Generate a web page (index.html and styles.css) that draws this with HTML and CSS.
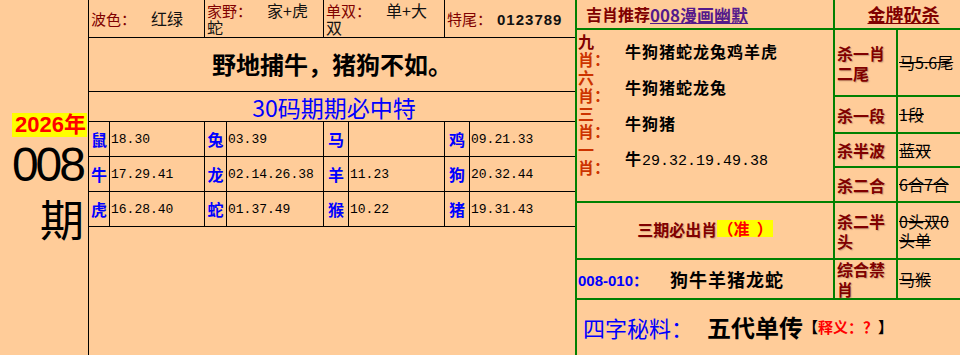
FILE: index.html
```html
<!DOCTYPE html>
<html lang="zh-CN">
<head>
<meta charset="utf-8">
<title>008期</title>
<link rel="stylesheet" href="styles.css">
</head>
<body>
<div class="page">
  <div class="issue">
    <span class="year">2026年</span>
    <span class="num">008</span>
    <span class="qi">期</span>
  </div>

  <div class="main">
    <div class="c s2 top"><div><span class="lbl">波色：</span><span class="val">红绿</span></div></div>
    <div class="c s2 top"><div><span class="lbl">家野：</span><span class="val">家+虎蛇</span></div></div>
    <div class="c s2 top"><div><span class="lbl">单双：</span><span class="val">单+大双</span></div></div>
    <div class="c s2 top end"><div><span class="lbl">特尾：</span><span class="val tail">0123789</span></div></div>

    <div class="c full slogan">野地捕牛，猪狗不如。</div>
    <div class="c full title">30码期期必中特</div>

    <div class="c an">鼠</div><div class="c nums">18.30</div>
    <div class="c an">兔</div><div class="c nums">03.39</div>
    <div class="c an">马</div><div class="c nums"></div>
    <div class="c an">鸡</div><div class="c nums end">09.21.33</div>

    <div class="c an">牛</div><div class="c nums">17.29.41</div>
    <div class="c an">龙</div><div class="c nums">02.14.26.38</div>
    <div class="c an">羊</div><div class="c nums">11.23</div>
    <div class="c an">狗</div><div class="c nums end">20.32.44</div>

    <div class="c an">虎</div><div class="c nums">16.28.40</div>
    <div class="c an">蛇</div><div class="c nums">01.37.49</div>
    <div class="c an">猴</div><div class="c nums">10.22</div>
    <div class="c an">猪</div><div class="c nums end">19.31.43</div>
  </div>

  <div class="panel">
    <div class="p head1"><span class="hl">吉肖推荐</span><span class="link">008漫画幽默</span></div>
    <div class="p head2"><span>金牌砍杀</span></div>

    <div class="p nine">
      <div class="nrow"><div class="nl"><span class="d">九</span><br>肖：</div><div class="nv">牛狗猪蛇龙兔鸡羊虎</div></div>
      <div class="nrow"><div class="nl">六<br>肖：</div><div class="nv">牛狗猪蛇龙兔</div></div>
      <div class="nrow"><div class="nl">三<br>肖：</div><div class="nv">牛狗猪</div></div>
      <div class="nrow"><div class="nl">一<br>肖：</div><div class="nv">牛<span class="mono">29.32.19.49.38</span></div></div>
    </div>

    <div class="p kl r2">杀一肖二尾</div><div class="p kv r2">马5.6尾</div>
    <div class="p kl r3">杀一段</div><div class="p kv r3">1段</div>
    <div class="p kl r4">杀半波</div><div class="p kv r4">蓝双</div>
    <div class="p kl r5">杀二合</div><div class="p kv r5">6合7合</div>

    <div class="p must"><span class="mt">三期必出肖</span><span class="zhun">（准&nbsp;&nbsp;）</span></div>
    <div class="p kl r6">杀二半头</div><div class="p kv r6">0头双0头单</div>

    <div class="p fore"><span class="range">008-010：</span><span class="pick">狗牛羊猪龙蛇</span></div>
    <div class="p kl r7">综合禁肖</div><div class="p kv r7">马猴</div>

    <div class="p secret"><span class="sk">四字秘料：</span><span class="sv">五代单传</span><span class="note">【<span class="red">释义：？</span>】</span></div>
  </div>
</div>
</body>
</html>
```

FILE: styles.css
```css
* { box-sizing: border-box; }
html, body { margin: 0; padding: 0; }
body {
  background: #FFCC99;
  font-family: "Noto Sans CJK SC", "Liberation Sans", sans-serif;
  color: #000;
  width: 960px;
  height: 355px;
  overflow: hidden;
}
.page {
  display: flex;
  width: 960px;
  height: 355px;
  overflow: hidden;
}

/* left issue column */
.issue {
  flex: 0 0 89px;
  border-right: 1px solid #000;
  display: flex;
  flex-direction: column;
  justify-content: center;
  align-items: flex-end;
  padding-right: 1px;
}
.year {
  background: #FFFF00;
  color: #FF0000;
  font: bold 22px/24px "Liberation Sans", "Noto Sans CJK SC", sans-serif;
  padding: 0 1px 0 3px;
}
.num {
  font: 48px/56px "Liberation Sans", sans-serif;
  letter-spacing: -3px;
  padding-right: 4px;
}
.qi {
  font: 44px/50px "Noto Sans CJK SC", sans-serif;
  padding-right: 3px;
}

/* main table */
.main {
  flex: 0 0 486px;
  display: grid;
  grid-template-columns: 21px 95px 22px 97px 25px 96px 25px 105px;
  grid-template-rows: 38px 54px 30px 35px 35px 35px;
  align-content: start;
}
.c {
  border-right: 1px solid #000;
  border-bottom: 1px solid #000;
  display: flex;
  align-items: center;
}
.c.end { border-right: none; }
.s2 { grid-column: span 2; }
.full {
  grid-column: 1 / -1;
  justify-content: center;
  border-right: none;
}
.top {
  padding: 0 4px 0 2px;
  font-size: 15px;
  line-height: 17px;
}
.lbl { color: #800000; }
.val { margin-left: 15px; color: #111; font-size: 16px; }
.val.tail {
  margin-left: 5px;
  font-weight: bold;
  font-size: 15px;
  letter-spacing: 1px;
  font-family: "Liberation Sans", sans-serif;
}
.slogan {
  font-size: 24px;
  font-weight: bold;
  padding-bottom: 2px;
}
.title {
  font-size: 23px;
  color: #0000FF;
  padding-left: 4px;
}
.an {
  justify-content: center;
  color: #0000FF;
  font-size: 16px;
  font-weight: bold;
}
.nums {
  font: 13px "Liberation Mono", monospace;
  padding-left: 1px;
}

/* right panel */
.panel {
  flex: 0 0 387px;
  border-left: 2px solid #008000;
  display: grid;
  grid-template-columns: 258px 63px 64px;
  grid-template-rows: 30px 67px 37px 34px 35px 57px 40px 55px;
}
.p {
  border-right: 2px solid #008000;
  border-bottom: 2px solid #008000;
  display: flex;
  align-items: center;
}
.head1 {
  grid-column: 1;
  grid-row: 1;
  padding-left: 9px;
}
.hl {
  color: #800000;
  font-size: 16px;
  font-weight: bold;
}
.link {
  color: #551A8B;
  font-size: 17px;
  font-weight: bold;
  text-decoration: underline;
}
.head2 {
  grid-column: 2 / 4;
  grid-row: 1;
  justify-content: center;
  padding-left: 12px;
}
.head2 span {
  color: #800000;
  font-size: 18px;
  font-weight: bold;
  text-decoration: underline;
}

.nine {
  grid-column: 1;
  grid-row: 2 / 6;
  display: block;
  padding-top: 2px;
}
.nrow {
  display: grid;
  grid-template-columns: 22px 1fr;
  height: 36px;
}
.nl {
  color: #CC3300;
  font-size: 16px;
  line-height: 18px;
  font-weight: bold;
  padding-left: 1px;
  white-space: nowrap;
}
.nl .d { color: #800000; }
.nv {
  align-self: center;
  padding-left: 26px;
  font-size: 16px;
  font-weight: bold;
  letter-spacing: 1px;
  line-height: 20px;
  padding-top: 2px;
}
.mono {
  font: 15px "Liberation Mono", monospace;
  letter-spacing: 0;
}

.kl {
  grid-column: 2;
  color: #800000;
  font-size: 16px;
  line-height: 20px;
  font-weight: bold;
  padding-left: 2px;
  text-shadow: 1px 1px 1px rgba(120, 80, 60, 0.35);
}
.kv {
  grid-column: 3;
  font-size: 16px;
  line-height: 19px;
  text-decoration: line-through;
  padding-left: 1px;
}
.r2 { grid-row: 2; }
.r3 { grid-row: 3; }
.r4 { grid-row: 4; }
.r5 { grid-row: 5; }
.r6 { grid-row: 6; }
.r7 { grid-row: 7; }

.must {
  grid-column: 1;
  grid-row: 6;
  justify-content: center;
  padding-bottom: 4px;
}
.mt {
  color: #800000;
  font-size: 16px;
  font-weight: bold;
  text-shadow: 1px 1px 1px rgba(120, 80, 60, 0.3);
}
.zhun {
  background: #FFFF00;
  color: #FF0000;
  font-size: 16px;
  font-weight: bold;
  line-height: 17px;
}
.fore {
  grid-column: 1;
  grid-row: 7;
  padding-left: 1px;
}
.range {
  color: #0000FF;
  font: bold 15px "Liberation Sans", sans-serif;
}
.pick {
  margin-left: 22px;
  font-size: 18px;
  font-weight: bold;
  letter-spacing: 1px;
}
.secret {
  grid-column: 1 / 4;
  grid-row: 8;
  padding-left: 6px;
  border-bottom: none;
  padding-bottom: 2px;
}
.sk {
  color: #0000FF;
  font-size: 22px;
}
.sv {
  margin-left: 14px;
  font-size: 24px;
  font-weight: bold;
}
.note {
  font-size: 15px;
  font-weight: bold;
}
.red { color: #FF0000; }
```
